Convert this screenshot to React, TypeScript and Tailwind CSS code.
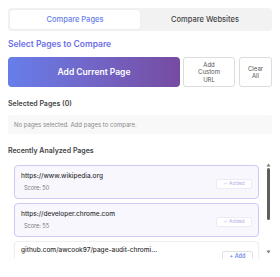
import React from "react";

type Recent = {
  url: string;
  score?: number;
  added: boolean;
};

const recent: Recent[] = [
  { url: "https://www.wikipedia.org", score: 50, added: true },
  { url: "https://developer.chrome.com", score: 55, added: true },
  { url: "github.com/awcook97/page-audit-chromi...", added: false },
];

function Tabs() {
  return (
    <div className="flex h-[23px] rounded-[4px] bg-[#f2f2f3] p-[2px]">
      <button className="flex-1 rounded-[3px] bg-white text-[7.5px] font-medium text-[#667eea] shadow-[0_0_2px_rgba(0,0,0,0.06)]">
        Compare Pages
      </button>
      <button className="flex-1 text-[7.5px] font-medium text-[#444]">
        Compare Websites
      </button>
    </div>
  );
}

function RecentCard({ item }: { item: Recent }) {
  return (
    <div
      className={
        item.added
          ? "flex h-[34px] shrink-0 justify-between rounded-[4px] border border-[#cdc9f2] bg-[#f8f7fe] pl-[6px] pr-[6px]"
          : "flex h-[34px] shrink-0 justify-between rounded-[4px] border border-[#efefef] bg-white pl-[6px] pr-[5px] shadow-[0_1px_2px_rgba(0,0,0,0.05)]"
      }
    >
      <div className={item.added ? "flex flex-col gap-[5px] pt-[6px]" : "flex flex-col pt-[4px]"}>
        <span className="text-[6.5px] font-medium leading-[8px] text-[#333]">{item.url}</span>
        {item.score !== undefined && (
          <span className="pl-[3px] text-[5.5px] leading-[7px] text-[#777]">Score: {item.score}</span>
        )}
      </div>
      {item.added ? (
        <span className="mt-[13px] flex h-[10px] w-[36px] items-center justify-center rounded-[2px] border border-[#ebeaf7] bg-white text-[5px] text-[#b4b1e6]">
          ✓ Added
        </span>
      ) : (
        <span className="mt-[9px] flex h-[10px] w-[31px] items-center justify-center rounded-[2px] border border-[#e2e2e2] bg-white text-[5.5px] font-medium leading-[6px] text-[#667eea]">
          + Add
        </span>
      )}
    </div>
  );
}

function Scrollbar() {
  return (
    <div className="flex w-[8px] flex-col items-center pt-[2px]">
      <svg width="5" height="4" viewBox="0 0 5 4">
        <path d="M2.5 0.5 L4.5 3.5 L0.5 3.5 Z" fill="#777" />
      </svg>
      <div className="mt-[1px] h-[52px] w-[3px] rounded-full bg-[#5f5f5f]" />
      <div className="flex-1" />
      <svg width="5" height="4" viewBox="0 0 5 4" className="mb-[5px]">
        <path d="M0.5 0.5 L4.5 0.5 L2.5 3.5 Z" fill="#777" />
      </svg>
    </div>
  );
}

export default function App() {
  return (
    <div
      className="flex h-[277px] w-[280px] flex-col overflow-hidden bg-white px-[8px] pt-[8px]"
      style={{ fontFamily: "Inter, 'Liberation Sans', sans-serif" }}
    >
      <Tabs />

      <h2 className="mt-[8px] text-[8.5px] font-semibold leading-[10px] text-[#6b6fe6]">
        Select Pages to Compare
      </h2>

      <div className="mt-[8px] flex h-[30px] gap-[3px]">
        <button className="w-[172px] rounded-[4px] bg-gradient-to-r from-[#667eea] to-[#764ba2] text-[8.5px] font-semibold text-white">
          Add Current Page
        </button>
        <button className="w-[52px] rounded-[3px] border border-[#dcdcdc] bg-white text-[6px] leading-[7.5px] text-[#555]">
          Add
          <br />
          Custom
          <br />
          URL
        </button>
        <button className="ml-[1px] flex-1 rounded-[3px] border border-[#dcdcdc] bg-white text-[6px] leading-[7.5px] text-[#555]">
          Clear
          <br />
          All
        </button>
      </div>

      <h3 className="mt-[13px] text-[7px] font-semibold leading-[8px] text-[#444]">Selected Pages (0)</h3>

      <div className="mt-[7px] flex h-[19px] items-center rounded-[3px] bg-[#f8f8f8] pl-[6px] text-[6px] text-[#8a8a8a]">
        No pages selected. Add pages to compare.
      </div>

      <h3 className="mt-[13px] text-[7px] font-semibold leading-[8px] text-[#444]">Recently Analyzed Pages</h3>

      <div className="mt-[6px] flex h-[98px] overflow-hidden">
        <div className="flex flex-1 flex-col gap-[4px] overflow-hidden pl-[6px] pr-[5px] pt-[4px]">
          {recent.map((item) => (
            <RecentCard key={item.url} item={item} />
          ))}
        </div>
        <Scrollbar />
      </div>
    </div>
  );
}
